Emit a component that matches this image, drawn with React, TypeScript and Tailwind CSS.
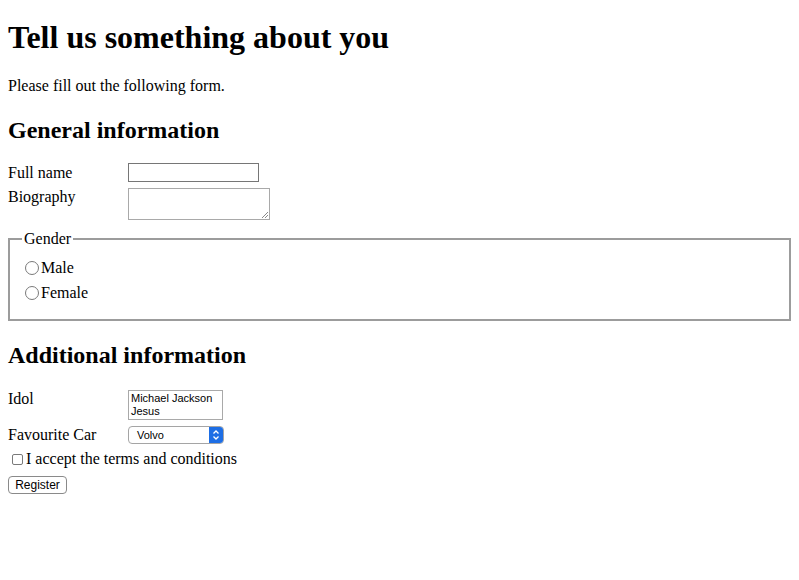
import React from "react";

export default function App() {
  const serif = { fontFamily: '"Liberation Serif", "Times New Roman", serif' };
  return (
    <div className="min-h-[580px] bg-white px-[8px] text-black" style={serif}>
      <h1 className="mt-[19px] text-[32px] font-bold leading-[37px]">Tell us something about you</h1>
      <p className="mt-[21px] text-[16px] leading-[18px]">Please fill out the following form.</p>
      <h2 className="mt-[21px] text-[24px] font-bold leading-[28px]">General information</h2>
      <form className="text-[16px] leading-[18px]">
        <div className="mt-[19px] flex items-center">
          <label className="w-[120px]">Full name</label>
          <input className="h-[19px] w-[131px] border border-[#767676] bg-white outline-none" />
        </div>
        <div className="mt-[6px] flex items-start">
          <label className="w-[120px]">Biography</label>
          <div className="relative h-[32px] w-[142px] border border-[#a9a9a9] bg-white">
            <svg className="absolute bottom-[1px] right-[1px]" width="7" height="7" viewBox="0 0 7 7">
              <path d="M1 7 L7 1 M4 7 L7 4" stroke="#8a8a8a" strokeWidth="1" />
            </svg>
          </div>
        </div>
        <fieldset className="mt-[10px] border-2 border-[#9c9c9c] px-[12px] pb-[14px] pt-[7px]">
          <legend className="px-[2px] leading-[18px]">Gender</legend>
          <div className="flex h-[25px] items-center">
            <span className="ml-[3px] mr-[2px] inline-block h-[14px] w-[14px] rounded-full border border-[#7a7a7a] bg-white" />
            <span>Male</span>
          </div>
          <div className="flex h-[25px] items-center">
            <span className="ml-[3px] mr-[2px] inline-block h-[14px] w-[14px] rounded-full border border-[#7a7a7a] bg-white" />
            <span>Female</span>
          </div>
        </fieldset>
        <h2 className="mt-[20px] text-[24px] font-bold leading-[28px]">Additional information</h2>
        <div className="mt-[21px] flex items-start">
          <label className="w-[120px]">Idol</label>
          <div
            className="h-[30px] w-[95px] border border-[#a9a9a9] bg-white pl-[2px] pt-[1px] text-[11px] leading-[13px]"
            style={{ fontFamily: '"Liberation Sans", Arial, sans-serif' }}
          >
            <div>Michael Jackson</div>
            <div>Jesus</div>
          </div>
        </div>
        <div className="mt-[6px] flex items-center">
          <label className="w-[120px]">Favourite Car</label>
          <div
            className="flex h-[18px] w-[96px] items-stretch overflow-hidden rounded-[4px] border border-[#a5a5a5] bg-white text-[11px]"
            style={{ fontFamily: '"Liberation Sans", Arial, sans-serif' }}
          >
            <span className="flex flex-1 items-center pl-[8px]">Volvo</span>
            <span className="flex w-[14px] items-center justify-center bg-[#1d6ee5]">
              <svg width="8" height="12" viewBox="0 0 8 12">
                <path d="M1.5 4.5 L4 2 L6.5 4.5 M1.5 7.5 L4 10 L6.5 7.5" stroke="white" strokeWidth="1.3" fill="none" />
              </svg>
            </span>
          </div>
        </div>
        <div className="mt-[6px] flex h-[18px] items-center">
          <span className="ml-[4px] mr-[3px] inline-block h-[11px] w-[11px] rounded-[2px] border border-[#7a7a7a] bg-white" />
          <span>I accept the terms and conditions</span>
        </div>
        <div className="mt-[7px]">
          <button
            type="button"
            className="h-[18px] w-[59px] rounded-[4px] border border-[#8a8a8a] bg-white text-[12px] leading-[16px]"
            style={{ fontFamily: '"Liberation Sans", Arial, sans-serif' }}
          >
            Register
          </button>
        </div>
      </form>
    </div>
  );
}
